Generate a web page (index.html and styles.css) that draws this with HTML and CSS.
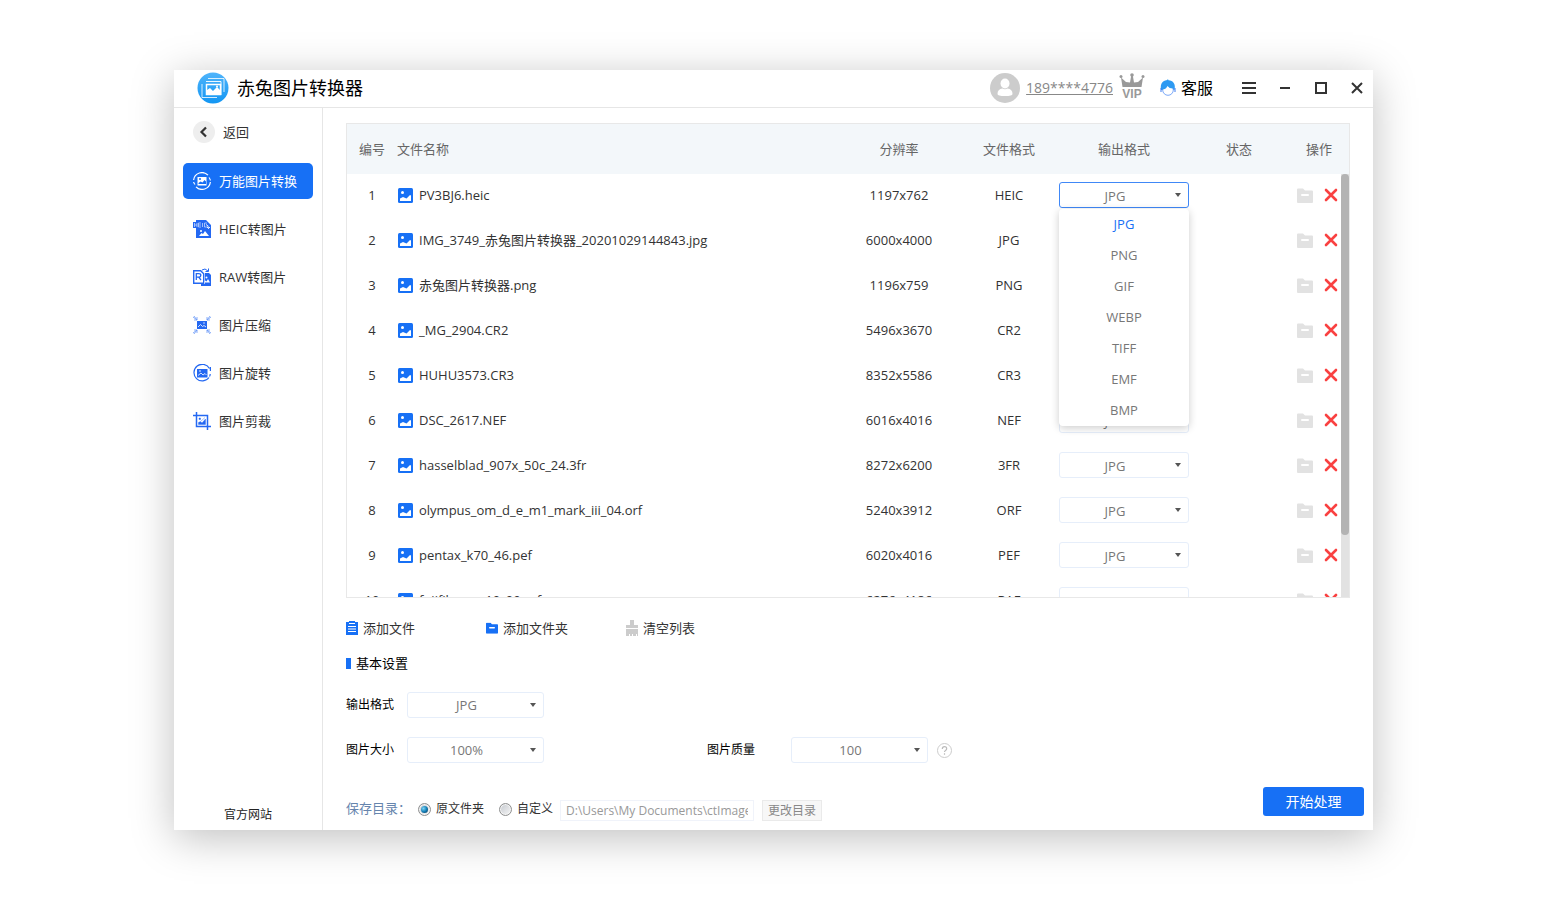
FILE: index.html
```html
<!DOCTYPE html>
<html lang="zh-CN">
<head>
    <meta charset="UTF-8">
    <meta name="viewport" content="width=device-width, initial-scale=1.0">
    <title>赤兔图片转换器</title>
    <link rel="stylesheet" href="styles.css">
</head>
<body>
    <!-- shared icons -->
    <svg class="sprite" aria-hidden="true">
        <symbol id="picture" viewBox="0 0 15 15">
            <rect width="15" height="15" rx="1.500" fill="#1770f5"/>
            <circle cx="4.500" cy="4.500" r="1.500" fill="#fff"/>
            <path d="M2 13v-2.500l3-1.500 3.500 1.500L12 7l1 .5V13z" fill="#fff"/>
        </symbol>
        <symbol id="folder" viewBox="0 0 16 15">
            <path d="M0 1.500Q0 .5 1 .5h5l2 2h7q1 0 1 1V14q0 1-1 1H1q-1 0-1-1z" fill="currentColor"/>
            <rect x="4" y="6" width="8" height="2" rx="1" fill="#fff"/>
        </symbol>
        <symbol id="cross" viewBox="0 0 14 14">
            <path d="M2 2l10 10M12 2L2 12" stroke="#f94141" stroke-width="2.600" stroke-linecap="round"/>
        </symbol>
    </svg>

    <div class="window">
        <header class="titlebar">
            <svg class="logo" viewBox="0 0 32 32">
                <defs>
                    <linearGradient id="sky" x1="0" y1="0" x2="0" y2="1">
                        <stop offset="0" stop-color="#4fb4fb"/>
                        <stop offset="1" stop-color="#1296f3"/>
                    </linearGradient>
                </defs>
                <circle cx="16" cy="16" r="15.500" fill="url(#sky)"/>
                <g fill="none" stroke="#fff">
                    <path d="M11 6.500h16V20" opacity=".8"/>
                    <path d="M9 9.500h15V23" opacity=".9"/>
                    <path d="M5 12v13.500h15" opacity=".8"/>
                    <path d="M9.500 12.500h14v10h-14z" stroke-width="1.500"/>
                </g>
                <path d="M10 22v-4l3-2 3 3 4-4 3 3v4z" fill="#fff"/>
                <circle cx="20" cy="14.500" r="1" fill="#fff"/>
            </svg>
            <h1>赤兔图片转换器</h1>
            <div class="account">
                <svg class="avatar" viewBox="0 0 30 30">
                    <circle cx="15" cy="15" r="15" fill="#ccc"/>
                    <ellipse cx="15" cy="10.500" rx="4.500" ry="5" fill="#fff"/>
                    <path d="M7.500 21q0-5 5-5.500 2.500 1.500 5 0 5 .5 5 5.500 0 2-7.500 2t-7.500-2z" fill="#fff"/>
                </svg>
                <a class="phone" href="#">189****4776</a>
                <svg class="vip" viewBox="0 0 26 26" fill="#999">
                    <path d="M3.500 14L2 4.500 7 9l4 .5L12.300 2h1.400L15 9.500 19 9l5-4.500L22.500 14z"/>
                    <circle cx="2" cy="3.500" r="1.500"/><circle cx="13" cy="2" r="1.800"/><circle cx="24" cy="3.500" r="1.500"/>
                    <text x="13" y="25" text-anchor="middle">VIP</text>
                </svg>
            </div>
            <a class="service" href="#">
                <svg viewBox="0 0 16 18">
                    <path d="M1 11C0 4 3 1.500 6.500 1.200L8 .3l.5 1C13 1.500 16 5 14.500 11z" fill="#2e9af2"/>
                    <circle cx="8" cy="11" r="5.300" fill="#fff" stroke="#5a93f5" stroke-width=".8"/>
                    <path d="M2 10.500q4 0 5.500-3.500 2 3 6.500 2.500V7Q8 2 2 7z" fill="#2e9af2"/>
                    <path d="M1 9v4M15 9v4" stroke="#3c7df0"/>
                </svg>
                客服
            </a>
            <div class="controls">
                <button aria-label="菜单"><svg viewBox="0 0 16 16"><path d="M1 3h14M1 8h14M1 13h14"/></svg></button>
                <button aria-label="最小化"><svg viewBox="0 0 16 16"><path d="M3 8h10"/></svg></button>
                <button aria-label="最大化"><svg viewBox="0 0 16 16"><path d="M3 3h10v10H3z"/></svg></button>
                <button aria-label="关闭"><svg viewBox="0 0 16 16"><path d="M3 3l10 10M13 3L3 13"/></svg></button>
            </div>
        </header>

        <div class="body">
            <nav class="sidebar">
                <a class="back" href="#">
                    <svg viewBox="0 0 22 22"><circle cx="11" cy="11" r="11" fill="#eee"/><path d="M13 6.500L8.500 11l4.500 4.500" fill="none" stroke="#333" stroke-width="2.200"/></svg>
                    返回
                </a>
                <a class="item active" href="#">
                    <svg viewBox="0 0 18 18">
                        <path d="M.6 8A8.400 8.400 0 0 1 15 3.200M17.400 10A8.400 8.400 0 0 1 3 14.800M16 5.500q1.200 1.500 1.400 3M2 12.500Q.8 11 .6 10" fill="none" stroke="#fff" stroke-width="1.200"/>
                        <path d="M4.500 5h9v8.500h-9z" fill="#fff"/>
                        <path d="M5.500 12v-1l2-1.500 2 1 2-2.500 1.500 1.500V12z" fill="#1770f5"/>
                        <circle cx="7" cy="7" r="1" fill="#1770f5"/>
                    </svg>
                    万能图片转换
                </a>
                <a class="item" href="#">
                    <svg viewBox="0 0 18 18">
                        <path d="M3 0h10l5 5v13H3V8H0V2h3z" fill="#2468f2"/>
                        <path d="M1.500 3v4M4 3v4M1.500 5H4M8 3H5.500v4H8M5.500 5H8M9.500 3v4M14 3h-2.500v4H14" fill="none" stroke="#c3d5fc" stroke-width=".8"/>
                        <path d="M13 4.500q2.500.5 2.500 4M14 7l1.500 1.500L17 7" fill="none" stroke="#fff" stroke-width=".9"/>
                        <path d="M6 16l2.500-3 1.500 1 2-3 4 5z" fill="#fff"/>
                        <circle cx="8" cy="11" r="1" fill="#fff"/>
                    </svg>
                    HEIC转图片
                </a>
                <a class="item" href="#">
                    <svg viewBox="0 0 18 18">
                        <path d="M.7 2.700h7l3 3v9.600h-10z" fill="#fff" stroke="#2468f2" stroke-width="1.400"/>
                        <path d="M3.300 12V5.700h2.500q2 0 2 1.700t-2 1.800H3.300M5.700 9.200L8 12" fill="none" stroke="#2468f2" stroke-width="1.300"/>
                        <path d="M12 5h4l2 2v11H8v-2h4z" fill="#2468f2"/>
                        <path d="M11 14.500l1.500-2 1 1 1.500-2.500 2 3.500z" fill="#fff"/>
                        <circle cx="13.500" cy="9.500" r="1" fill="#fff"/>
                        <path d="M9 2q3-2.500 6 1M15.500.5v3h-3" fill="none" stroke="#2468f2"/>
                    </svg>
                    RAW转图片
                </a>
                <a class="item" href="#">
                    <svg viewBox="0 0 18 18">
                        <path d="M4 5h10v8H4z" fill="#2468f2"/>
                        <path d="M5 11l2.500-2.500 2 2 1.500-1 2 1.500" fill="none" stroke="#fff" stroke-width=".8"/>
                        <circle cx="11" cy="7" r=".7" fill="#fff"/>
                        <path d="M0 1l4 3M1 0l3 4M4 1v3H1M18 1l-4 3M17 0l-3 4M14 1v3h3M0 17l4-3M1 18l3-4M4 17v-3H1M18 17l-4-3M17 18l-3-4M14 17v-3h3" fill="none" stroke="#6c9bf7" stroke-width=".8"/>
                    </svg>
                    图片压缩
                </a>
                <a class="item" href="#">
                    <svg viewBox="0 0 18 18">
                        <path d="M16.500 4.500A8.300 8.300 0 1 0 16 13.500M17.400 3v4M17.200 10q0 1.500-.7 2.500" fill="none" stroke="#2468f2" stroke-width="1.200"/>
                        <path d="M4 5h10.500v8.500H4z" fill="#2468f2"/>
                        <path d="M5 11.500l3-2.500 2 2 2-1.500 1.500 1.500" fill="none" stroke="#fff" stroke-width=".8"/>
                        <circle cx="7" cy="7" r=".8" fill="#fff"/>
                    </svg>
                    图片旋转
                </a>
                <a class="item" href="#">
                    <svg viewBox="0 0 18 18">
                        <path d="M3.500 0v14.500H18M0 3.500h14.500V18" fill="none" stroke="#2468f2" stroke-width="1.500"/>
                        <path d="M5.500 12.500v-2l2-1 1.500 1.500 3.500-4v5.500zM6 6h1.500v1.500H6zM8 9l4-3.500" fill="#2468f2" stroke="#2468f2" stroke-width=".4"/>
                    </svg>
                    图片剪裁
                </a>
                <a class="site" href="#">官方网站</a>
            </nav>

            <main class="main">
                <div class="list">
                    <table>
                        <thead>
                            <tr>
                                <th class="col-no">编号</th>
                                <th class="col-name">文件名称</th>
                                <th class="col-size">分辨率</th>
                                <th class="col-type">文件格式</th>
                                <th class="col-out">输出格式</th>
                                <th class="col-state">状态</th>
                                <th class="col-ops">操作</th>
                            </tr>
                        </thead>
                        <tbody id="files"></tbody>
                    </table>
                    <div class="scrollbar"><div class="thumb"></div></div>
                </div>

                <div class="tools">
                    <button>
                        <svg viewBox="0 0 12 14"><path d="M0 1h3V0h6v1h3v13H0z" fill="#1770f5"/><path d="M2 5.500h8M2 8h8M2 10.500h8M3 2.500h6" stroke="#fff"/></svg>
                        添加文件
                    </button>
                    <button>
                        <svg class="blue" viewBox="0 0 16 15"><use href="#folder"/></svg>
                        添加文件夹
                    </button>
                    <button>
                        <svg viewBox="0 0 12 16"><path d="M4 0h4v5h4v3H0V5h4zM0 9h12v7h-1v-2h-1v2H7v-2H6v2H4v-2H3v2H0z" fill="#ccc"/></svg>
                        清空列表
                    </button>
                </div>

                <h2>基本设置</h2>
                <div class="settings">
                    <div class="field">
                        <label for="format">输出格式</label>
                        <select id="format"><option>JPG</option></select>
                    </div>
                    <div class="field">
                        <label for="scale">图片大小</label>
                        <select id="scale"><option>100%</option></select>
                    </div>
                    <div class="field quality">
                        <label for="quality">图片质量</label>
                        <select id="quality"><option>100</option></select>
                        <svg class="help" viewBox="0 0 15 15"><circle cx="7.500" cy="7.500" r="7" fill="none" stroke="#ccc"/><path d="M5.300 6q0-2.300 2.200-2.300T9.700 5.700q0 1-1.200 1.700-1 .6-1 1.600M7.500 10.300v1.400" fill="none" stroke="#bbb" stroke-width="1.200"/></svg>
                    </div>
                </div>

                <div class="footer">
                    <span class="save">保存目录：</span>
                    <label class="radio"><input type="radio" name="dir" checked>原文件夹</label>
                    <label class="radio"><input type="radio" name="dir">自定义</label>
                    <input class="path" type="text" aria-label="保存目录" value="D:\Users\My Documents\ctImageConverter" readonly>
                    <button class="change">更改目录</button>
                    <button class="start">开始处理</button>
                </div>
            </main>
        </div>
    </div>
    <script src="script.js"></script>
</body>
</html>
```
FILE: styles.css
```css
* {
    box-sizing: border-box;
}

body {
    margin: 0;
    padding: 70px 173px 70px 174px;
    background: #fff;
    color: #333;
    font-family: "Open Sans", "Noto Sans CJK SC", sans-serif;
    font-size: 13px;
    line-height: 20px;
}

a {
    color: inherit;
    text-decoration: none;
}

button,
input,
select {
    margin: 0;
    font: inherit;
    color: inherit;
}

button {
    padding: 0;
    border: none;
    background: none;
    cursor: pointer;
}

svg {
    display: block;
    flex: none;
}

.sprite {
    position: absolute;
    width: 0;
    height: 0;
}

.window {
    background: #fff;
    box-shadow: 0 8px 40px rgba(0, 0, 0, 0.25);
}

/* title bar */
.titlebar {
    display: flex;
    align-items: center;
    height: 38px;
    padding: 0 8px 2px 23px;
    border-bottom: 1px solid #e6e6e6;
    color: #000;
}

.logo {
    width: 32px;
    height: 32px;
}

h1 {
    margin: 0 auto 0 8px;
    font-size: 18px;
    font-weight: 400;
    line-height: 24px;
}

.account {
    display: flex;
    align-items: center;
    color: #888;
    font-size: 14px;
}

.avatar {
    width: 30px;
    height: 30px;
    margin-right: 6px;
}

.phone {
    text-decoration: underline;
}

.vip {
    width: 26px;
    height: 26px;
    margin: 0 15px 4px 6px;
    overflow: visible;
    font: bold 12px "Liberation Sans", sans-serif;
}

.service {
    display: flex;
    align-items: center;
    gap: 5px;
    margin-right: 28px;
    font-size: 16px;
}

.service svg {
    width: 16px;
    height: 18px;
}

.controls {
    display: flex;
    gap: 20px;
}

.controls svg {
    width: 16px;
    height: 16px;
    fill: none;
    stroke: #333;
    stroke-width: 2;
}

/* sidebar */
.body {
    display: flex;
}

.sidebar {
    display: flex;
    flex-direction: column;
    gap: 12px;
    width: 149px;
    padding: 13px 9px 5px;
    border-right: 1px solid #e6e6e6;
}

.back {
    display: flex;
    align-items: center;
    gap: 8px;
    height: 22px;
    margin-bottom: 8px;
    padding-left: 10px;
}

.back svg {
    width: 22px;
    height: 22px;
}

.item {
    display: flex;
    align-items: center;
    gap: 8px;
    height: 36px;
    padding-left: 10px;
    border-radius: 5px;
}

.item svg {
    width: 18px;
    height: 18px;
}

.item.active {
    background: #1770f5;
    color: #fff;
}

.site {
    margin-top: auto;
    color: #222;
    font-size: 12px;
    text-align: center;
}

/* file list */
.main {
    flex: 1;
    min-width: 0;
    padding: 15px 9px 9px 23px;
}

.list {
    position: relative;
    height: 475px;
    margin-right: 14px;
    overflow: hidden;
    border: 1px solid #e8e8e8;
}

table {
    width: 100%;
    table-layout: fixed;
    border-collapse: collapse;
    text-align: center;
}

th {
    height: 50px;
    padding: 0;
    background: #f3f7fa;
    color: #666;
    font-weight: 400;
}

td {
    position: relative;
    height: 45px;
    padding: 8px 0 0;
    line-height: 26px;
    vertical-align: top;
}

.col-no {
    width: 50px;
}

.col-name {
    text-align: left;
}

.col-size {
    width: 120px;
}

.col-type,
.col-state {
    width: 100px;
}

.col-out {
    width: 130px;
}

.col-ops {
    width: 60px;
}

.file {
    display: flex;
    align-items: center;
    gap: 6px;
    height: 26px;
    padding-left: 1px;
}

.file svg {
    width: 15px;
    height: 15px;
}

.ops {
    display: flex;
    align-items: center;
    gap: 11px;
    height: 26px;
    padding-left: 8px;
}

.ops svg {
    width: 16px;
    height: 15px;
    color: #e2e2e2;
}

.ops button + button svg {
    width: 14px;
    height: 14px;
}

select {
    display: block;
    width: 100%;
    height: 26px;
    padding: 0 18px 0 0;
    border: 1px solid #e6eefa;
    border-radius: 3px;
    appearance: none;
    background: #fff url("data:image/svg+xml,%3Csvg xmlns='http://www.w3.org/2000/svg' width='6' height='4'%3E%3Cpath d='M0 0h6L3 4z' fill='%23555'/%3E%3C/svg%3E") no-repeat right 7px top 10px;
    color: #777;
    text-align: center;
    text-align-last: center;
}

select.open {
    border-color: #4088f7;
}

.menu {
    position: absolute;
    z-index: 1;
    top: 35px;
    left: 0;
    width: 100%;
    margin: 0;
    padding: 0;
    border-radius: 4px;
    background: #fff;
    box-shadow: 0 2px 8px rgba(0, 0, 0, 0.2);
    color: #777;
    line-height: 31px;
    list-style: none;
}

.menu .selected {
    color: #1770f5;
}

.scrollbar {
    position: absolute;
    top: 50px;
    right: 0;
    bottom: 0;
    width: 8px;
    background: #e2e2e2;
}

.thumb {
    height: 361px;
    border-radius: 4px;
    background: #b3b3b3;
}

/* buttons below the list */
.tools {
    display: flex;
    margin-top: 20px;
}

.tools button {
    display: flex;
    align-items: center;
    gap: 5px;
    width: 140px;
}

.tools svg {
    width: 12px;
    height: 16px;
}

.tools .blue {
    color: #1770f5;
}

/* settings */
h2 {
    display: flex;
    align-items: center;
    gap: 5px;
    margin: 15px 0 19px;
    color: #000;
    font-size: 13px;
    font-weight: 400;
}

h2::before {
    content: "";
    width: 5px;
    height: 11px;
    background: #1770f5;
}

.settings {
    display: grid;
    grid-template-columns: 361px 1fr;
    gap: 19px 0;
}

.field {
    display: flex;
    align-items: center;
    grid-column: 1;
}

.field label {
    width: 61px;
    color: #000;
    font-size: 12px;
    line-height: 22px;
}

.field select {
    width: 137px;
}

.quality {
    grid-area: 2 / 2;
}

.quality label {
    width: 84px;
}

.help {
    width: 15px;
    height: 15px;
    margin-left: 9px;
}

/* save folder */
.footer {
    display: flex;
    align-items: flex-start;
    margin-top: 24px;
    font-size: 12px;
}

.save {
    width: 72px;
    margin-top: 11px;
    color: #6685ad;
    font-family: "Noto Sans CJK TC", sans-serif;
    font-size: 13px;
}

.radio {
    display: flex;
    align-items: center;
    gap: 5px;
    margin: 12px 15px 0 0;
}

.radio input {
    display: grid;
    place-items: center;
    width: 13px;
    height: 13px;
    border: 1px solid #8e8f8f;
    border-radius: 50%;
    appearance: none;
    background: linear-gradient(135deg, #c5c9cf, #f6f6f6);
    box-shadow: inset 0 0 0 1px #f4f4f4;
}

.radio input:checked::before {
    content: "";
    width: 7px;
    height: 7px;
    border-radius: 50%;
    background: radial-gradient(circle at 35% 35%, #7fd4f5, #1480b8 50%, #0b2f4e);
}

.path {
    width: 194px;
    height: 21px;
    margin: 13px 8px 0 -8px;
    padding: 0 5px;
    border: 1px solid #f0f3fa;
    background: #fff;
    color: #999;
}

.change {
    width: 60px;
    height: 21px;
    margin: 13px auto 0 0;
    border: 1px solid #eaeaea;
    background: #f7f7f7;
    color: #888;
}

.start {
    width: 101px;
    height: 29px;
    border-radius: 3px;
    background: #1770f5;
    color: #fff;
    font-size: 14px;
}
```
FILE: script.js
```js
const files = [
    ['PV3BJ6.heic', '1197x762', 'HEIC'],
    ['IMG_3749_赤兔图片转换器_20201029144843.jpg', '6000x4000', 'JPG'],
    ['赤兔图片转换器.png', '1196x759', 'PNG'],
    ['_MG_2904.CR2', '5496x3670', 'CR2'],
    ['HUHU3573.CR3', '8352x5586', 'CR3'],
    ['DSC_2617.NEF', '6016x4016', 'NEF'],
    ['hasselblad_907x_50c_24.3fr', '8272x6200', '3FR'],
    ['olympus_om_d_e_m1_mark_iii_04.orf', '5240x3912', 'ORF'],
    ['pentax_k70_46.pef', '6020x4016', 'PEF'],
    ['fujifilm_x_s10_09.raf', '6276x4186', 'RAF']
];
const formats = ['JPG', 'PNG', 'GIF', 'WEBP', 'TIFF', 'EMF', 'BMP'];

const menu = `<ul class="menu">${formats.map((f, i) => `<li class="${i === 0 ? 'selected' : ''}">${f}</li>`).join('')}</ul>`;

document.getElementById('files').innerHTML = files.map(([name, size, type], i) => `
    <tr>
        <td>${i + 1}</td>
        <td><div class="file"><svg><use href="#picture"/></svg>${name}</div></td>
        <td>${size}</td>
        <td>${type}</td>
        <td>
            <select class="${i === 0 ? 'open' : ''}" aria-label="输出格式"><option>JPG</option></select>
            ${i === 0 ? menu : ''}
        </td>
        <td></td>
        <td>
            <div class="ops">
                <button aria-label="打开文件夹"><svg><use href="#folder"/></svg></button>
                <button aria-label="删除"><svg><use href="#cross"/></svg></button>
            </div>
        </td>
    </tr>`).join('');
```
